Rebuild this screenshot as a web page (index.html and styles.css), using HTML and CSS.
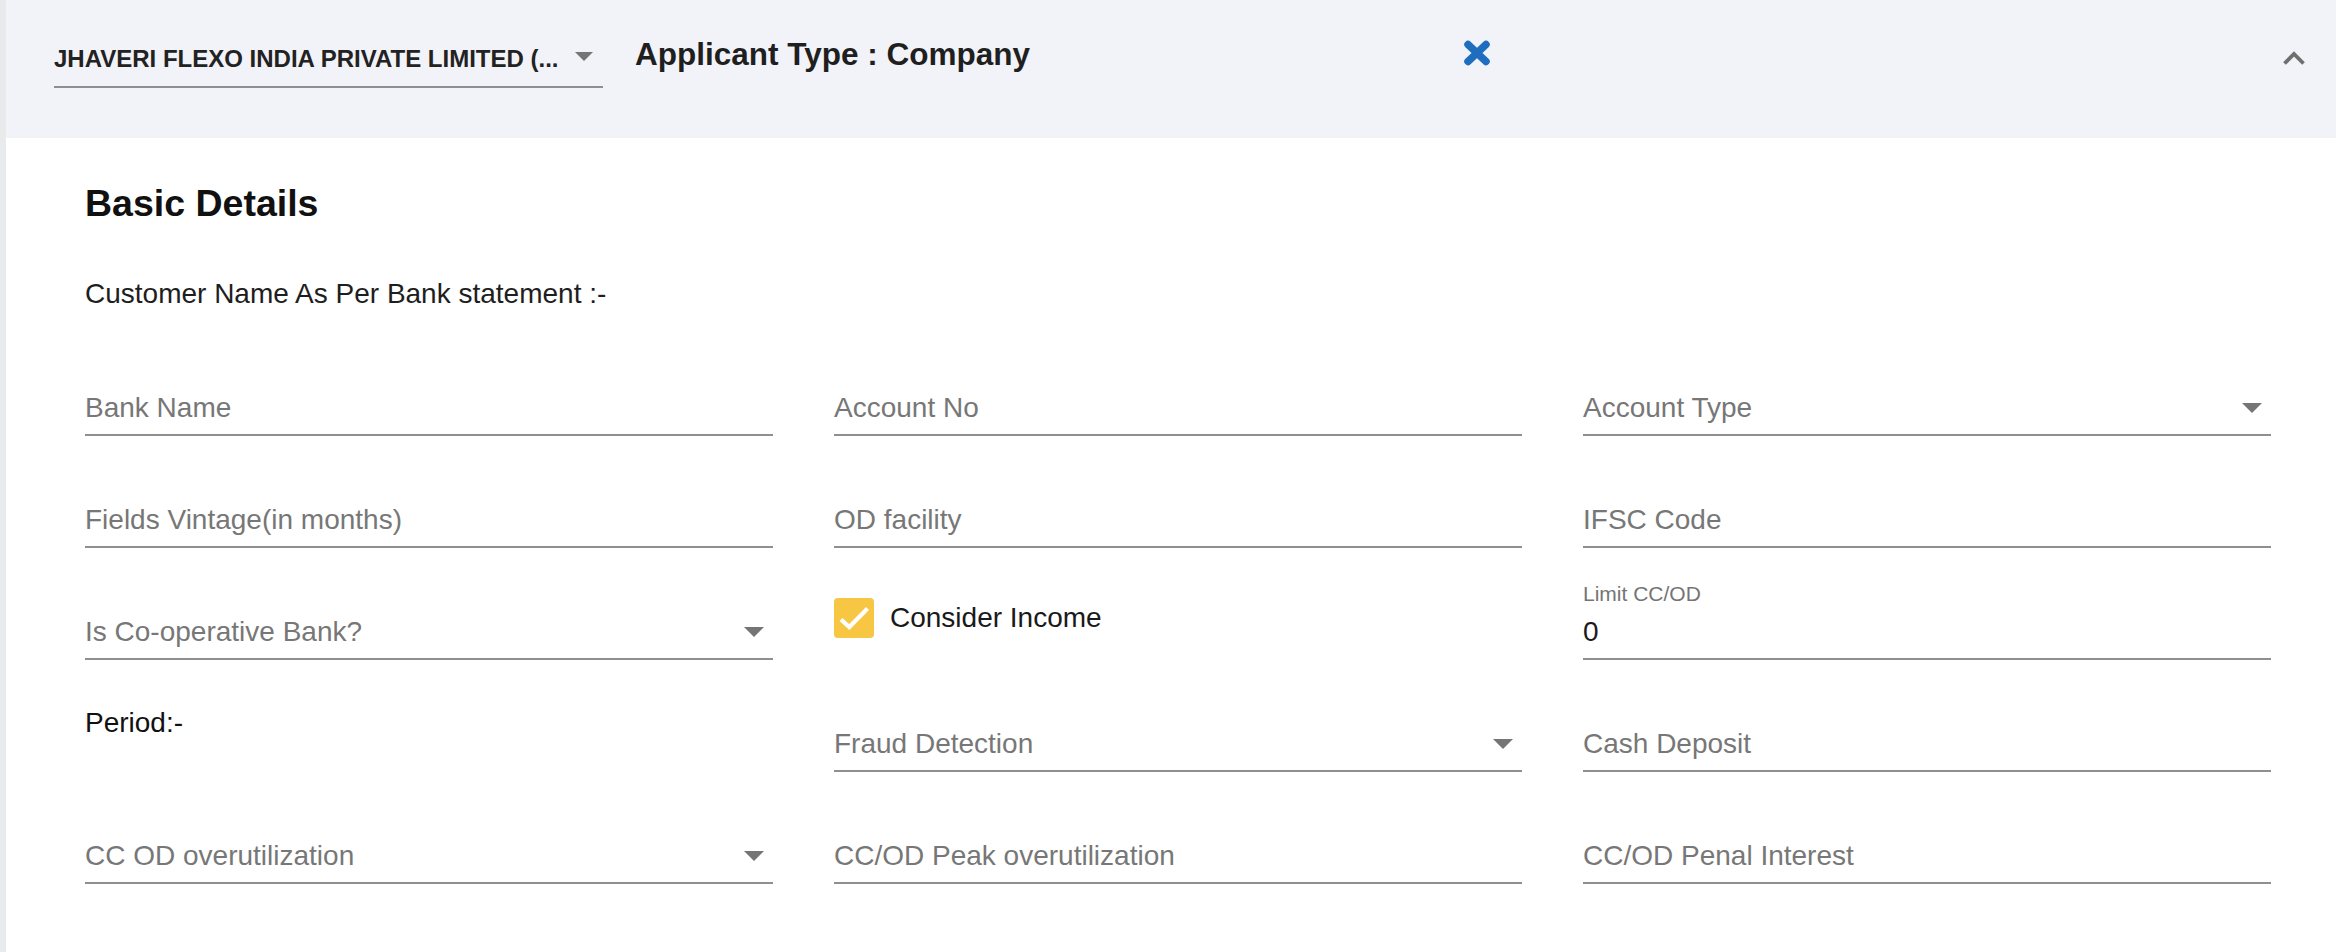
FILE: index.html
```html
<!DOCTYPE html>
<html lang="en">
<head>
<meta charset="utf-8">
<title>Basic Details</title>
<link rel="stylesheet" href="styles.css">
</head>
<body>
<div class="page">
  <header class="app-head">
    <div class="applicant-select">
      <span class="applicant-name">JHAVERI FLEXO INDIA PRIVATE LIMITED (...</span>
      <span class="caret caret-head"></span>
    </div>
    <div class="applicant-type">Applicant Type : Company</div>
    <button class="icon-btn close-btn" aria-label="Remove">
      <svg width="28" height="26" viewBox="0 0 28 26"><path d="M5 4.5 L23 21.5 M23 4.5 L5 21.5" stroke="#1e6dbf" stroke-width="7.5" stroke-linecap="round" fill="none"/></svg>
    </button>
    <button class="icon-btn collapse-btn" aria-label="Collapse">
      <svg width="22" height="14" viewBox="0 0 22 14"><path d="M1.5 12.5 L11 3 L20.5 12.5" stroke="#6f6f6f" stroke-width="3.8" fill="none" stroke-linejoin="miter"/></svg>
    </button>
  </header>

  <section class="details">
    <h2 class="section-title">Basic Details</h2>
    <p class="customer-name">Customer Name As Per Bank statement :-</p>

    <div class="form-grid">
      <div class="field"><div class="value-line"><span class="placeholder">Bank Name</span></div></div>
      <div class="field"><div class="value-line"><span class="placeholder">Account No</span></div></div>
      <div class="field"><div class="value-line"><span class="placeholder">Account Type</span><span class="caret"></span></div></div>

      <div class="field"><div class="value-line"><span class="placeholder">Fields Vintage(in months)</span></div></div>
      <div class="field"><div class="value-line"><span class="placeholder">OD facility</span></div></div>
      <div class="field"><div class="value-line"><span class="placeholder">IFSC Code</span></div></div>

      <div class="field"><div class="value-line"><span class="placeholder">Is Co-operative Bank?</span><span class="caret"></span></div></div>
      <div class="check-field">
        <span class="checkbox">
          <svg width="40" height="40" viewBox="0 0 40 40"><path d="M7 21.5 L15.3 29 L33.5 10.5" stroke="#ffffff" stroke-width="4.2" fill="none"/></svg>
        </span>
        <span class="check-label">Consider Income</span>
      </div>
      <div class="field"><span class="float-label">Limit CC/OD</span><div class="value-line"><span class="value">0</span></div></div>

      <div class="plain-cell">Period:-</div>
      <div class="field"><div class="value-line"><span class="placeholder">Fraud Detection</span><span class="caret"></span></div></div>
      <div class="field"><div class="value-line"><span class="placeholder">Cash Deposit</span></div></div>

      <div class="field"><div class="value-line"><span class="placeholder">CC OD overutilization</span><span class="caret"></span></div></div>
      <div class="field"><div class="value-line"><span class="placeholder">CC/OD Peak overutilization</span></div></div>
      <div class="field"><div class="value-line"><span class="placeholder">CC/OD Penal Interest</span></div></div>
    </div>
  </section>
</div>
</body>
</html>
```

FILE: styles.css
```css
html, body {
  margin: 0;
  padding: 0;
  background: #ffffff;
}

body {
  font-family: "Liberation Sans", Arial, Helvetica, sans-serif;
  color: #1c1c1c;
}

.page {
  min-height: 100vh;
  box-sizing: border-box;
  border-left: 6px solid #e9eaec;
  background: #ffffff;
}

/* ---------- header ---------- */
.app-head {
  display: flex;
  align-items: flex-start;
  height: 138px;
  box-sizing: border-box;
  padding: 45px 31px 0 48px;
  background: #f2f3f8;
}

.applicant-select {
  width: 549px;
  height: 43px;
  box-sizing: border-box;
  display: flex;
  align-items: center;
  justify-content: space-between;
  padding-bottom: 13px;
  border-bottom: 2px solid #8f8f93;
  flex-shrink: 0;
}

.applicant-name {
  font-size: 24px;
  line-height: 28px;
  font-weight: 700;
  color: #222222;
  white-space: nowrap;
}

.caret {
  width: 0;
  height: 0;
  border-left: 10px solid transparent;
  border-right: 10px solid transparent;
  border-top: 10px solid #757575;
  margin-right: 9px;
  flex-shrink: 0;
}

.caret-head {
  border-left-width: 9px;
  border-right-width: 9px;
  border-top-width: 9px;
  margin-right: 10px;
  margin-bottom: 6px;
}

.applicant-type {
  width: 828px;
  flex-shrink: 0;
  margin-left: 32px;
  margin-top: -9px;
  font-size: 31.5px;
  line-height: 36px;
  font-weight: 700;
  color: #1f1f1f;
}

.icon-btn {
  border: 0;
  padding: 0;
  margin: 0;
  background: transparent;
  display: block;
  line-height: 0;
}

.icon-btn svg {
  display: block;
}

.close-btn {
  margin-top: -5px;
}

.collapse-btn {
  margin-left: auto;
  margin-top: 6px;
}

/* ---------- details ---------- */
.details {
  padding: 43px 65px 0 79px;
}

.section-title {
  margin: 0;
  font-size: 37.5px;
  line-height: 44px;
  font-weight: 700;
  color: #111111;
}

.customer-name {
  margin: 53px 0 0;
  font-size: 28px;
  line-height: 32px;
  color: #1e1e1e;
}

.form-grid {
  margin-top: 36px;
  display: grid;
  grid-template-columns: repeat(3, 1fr);
  column-gap: 61px;
  row-gap: 22px;
}

.field {
  height: 90px;
  box-sizing: border-box;
  display: flex;
  flex-direction: column;
  justify-content: flex-end;
  padding-bottom: 10px;
  border-bottom: 2px solid #8f8f8f;
}

.value-line {
  display: flex;
  align-items: center;
  justify-content: space-between;
  height: 32px;
  font-size: 28px;
  line-height: 32px;
}

.placeholder {
  color: #777777;
}

.value {
  color: #1a1a1a;
}

.float-label {
  font-size: 21px;
  line-height: 24px;
  color: #757575;
  margin-bottom: 10px;
}

.check-field {
  height: 90px;
  box-sizing: border-box;
  display: flex;
  align-items: flex-end;
  padding-bottom: 22px;
}

.check-field .checkbox {
  width: 40px;
  height: 40px;
  border-radius: 4px;
  background: #f7c744;
  flex-shrink: 0;
}

.check-field .checkbox svg {
  display: block;
}

.check-label {
  margin-left: 16px;
  font-size: 28px;
  line-height: 32px;
  height: 32px;
  margin-bottom: 4px;
  color: #1a1a1a;
}

.plain-cell {
  height: 90px;
  box-sizing: border-box;
  padding-top: 25px;
  font-size: 28px;
  line-height: 32px;
  color: #111111;
}
```
